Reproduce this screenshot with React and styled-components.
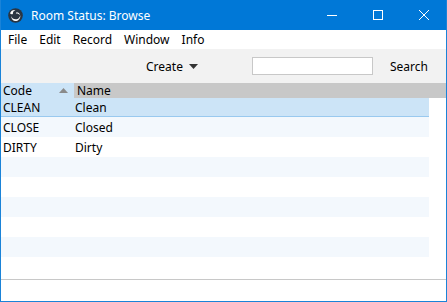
import styled, { createGlobalStyle } from "styled-components";

const blue = "#0078d7";
const font = `"Noto Sans", "Segoe UI", sans-serif`;

const GlobalStyle = createGlobalStyle`
  html, body { margin: 0; padding: 0; background: #fff; }
  * { box-sizing: border-box; }
`;

const Window = styled.div`
  width: 447px;
  height: 302px;
  border: 1px solid #1a83d8;
  border-top: none;
  display: flex;
  flex-direction: column;
  font-family: ${font};
  font-size: 12px;
  color: #000;
  background: #fff;
  overflow: hidden;
`;

const TitleBar = styled.div`
  height: 30px;
  flex: none;
  background: ${blue};
  color: #fff;
  display: flex;
  align-items: center;
  margin: 0 -1px;
  padding-left: 8px;
`;

const Title = styled.span`
  margin-left: 8px;
  font-size: 12px;
  flex: 1;
`;

const WinButton = styled.div`
  width: 46px;
  height: 30px;
  display: flex;
  align-items: center;
  justify-content: center;
`;

const MenuBar = styled.div`
  height: 19px;
  flex: none;
  display: flex;
  align-items: center;
  padding-left: 7px;
  gap: 12px;
`;

const MenuItem = styled.span`
  font-size: 12px;
`;

const Toolbar = styled.div`
  height: 34px;
  flex: none;
  background: #f2f2f2;
  display: flex;
  align-items: center;
`;

const CreateButton = styled.div`
  margin-left: 145px;
  display: flex;
  align-items: center;
  gap: 6px;
`;

const SearchBox = styled.div`
  margin-left: 54px;
  width: 121px;
  height: 18px;
  border: 1px solid #c8c8c8;
  background: #fff;
`;

const SearchLabel = styled.span`
  margin-left: 17px;
`;

const Header = styled.div`
  height: 15px;
  flex: none;
  display: flex;
  background: #c8c8c8;
`;

const HeaderCell = styled.div`
  width: ${(p) => p.$w || "auto"};
  flex: ${(p) => (p.$w ? "none" : 1)};
  background: ${(p) => (p.$active ? "#cce4f7" : "#c8c8c8")};
  display: flex;
  align-items: center;
  justify-content: space-between;
  padding: 0 6px 0 2px;
  line-height: 15px;
  margin-right: ${(p) => (p.$active ? "1px" : 0)};
`;

const Rows = styled.div`
  flex: 1;
  width: 428px;
`;

const Row = styled.div`
  height: ${(p) => (p.$selected ? "19px" : "20px")};
  display: flex;
  align-items: center;
  background: ${(p) =>
    p.$selected ? "#cce4f7" : p.$striped ? "#f3f8fd" : "#fff"};
  border-bottom: ${(p) => (p.$selected ? "1px solid #99c9ef" : "none")};
`;

const Cell = styled.div`
  width: ${(p) => p.$w || "auto"};
  padding-left: ${(p) => p.$pad || "0"};
`;

const StatusBar = styled.div`
  height: 22px;
  flex: none;
  border-top: 1px solid #c8c8c8;
`;

const Caret = () => (
  <svg width="9" height="5" viewBox="0 0 9 5">
    <path d="M0 0h9L4.5 5z" fill="#333" />
  </svg>
);

const SortUp = () => (
  <svg width="9" height="5" viewBox="0 0 9 5">
    <path d="M0 5h9L4.5 0z" fill="#8a8a8a" />
  </svg>
);

const AppIcon = () => (
  <svg width="15" height="15" viewBox="0 0 16 16">
    <circle cx="8" cy="8" r="7.8" fill="#2a3542" />
    <path
      d="M2.2 5.5C3 3 5.6 1.6 8 2.2 6 3 5 4.6 5.2 6.4 4 7 2.8 6.8 2.2 5.5z"
      fill="#fff"
    />
    <path
      d="M3.2 8.6c0.9 2.6 3.6 4 6.2 3.3 2-0.5 3.4-2.2 3.6-4.2 0.6 2.7-1.2 5.5-4 6.1-2.8 0.6-5.4-1.4-5.8-5.2z"
      fill="#fff"
    />
    <path d="M9 4.5c2 0 3.6 1.4 3.8 3.2-1.2-1.4-2.8-2-4.4-1.6z" fill="#fff" />
  </svg>
);

const rows = [
  ["CLEAN", "Clean"],
  ["CLOSE", "Closed"],
  ["DIRTY", "Dirty"],
  ["", ""],
  ["", ""],
  ["", ""],
  ["", ""],
  ["", ""],
  ["", ""],
];

export default function App() {
  return (
    <>
      <GlobalStyle />
      <Window>
        <TitleBar>
          <AppIcon />
          <Title>Room Status: Browse</Title>
          <WinButton>
            <svg width="10" height="10" viewBox="0 0 10 10">
              <path d="M0 5.5h10" stroke="#fff" strokeWidth="1" />
            </svg>
          </WinButton>
          <WinButton>
            <svg width="10" height="10" viewBox="0 0 10 10">
              <rect x="0.5" y="0.5" width="9" height="9" fill="none" stroke="#fff" />
            </svg>
          </WinButton>
          <WinButton>
            <svg width="10" height="10" viewBox="0 0 10 10">
              <path d="M0 0L10 10M10 0L0 10" stroke="#fff" strokeWidth="1" />
            </svg>
          </WinButton>
        </TitleBar>
        <MenuBar>
          <MenuItem>File</MenuItem>
          <MenuItem>Edit</MenuItem>
          <MenuItem>Record</MenuItem>
          <MenuItem>Window</MenuItem>
          <MenuItem>Info</MenuItem>
        </MenuBar>
        <Toolbar>
          <CreateButton>
            Create <Caret />
          </CreateButton>
          <SearchBox />
          <SearchLabel>Search</SearchLabel>
        </Toolbar>
        <Header>
          <HeaderCell $w="73px" $active>
            Code <SortUp />
          </HeaderCell>
          <HeaderCell>Name</HeaderCell>
        </Header>
        <Rows>
          {rows.map(([code, name], i) => (
            <Row key={i} $selected={i === 0} $striped={i % 2 === 1}>
              <Cell $w="74px" $pad="2px">{code}</Cell>
              <Cell>{name}</Cell>
            </Row>
          ))}
        </Rows>
        <StatusBar />
      </Window>
    </>
  );
}
